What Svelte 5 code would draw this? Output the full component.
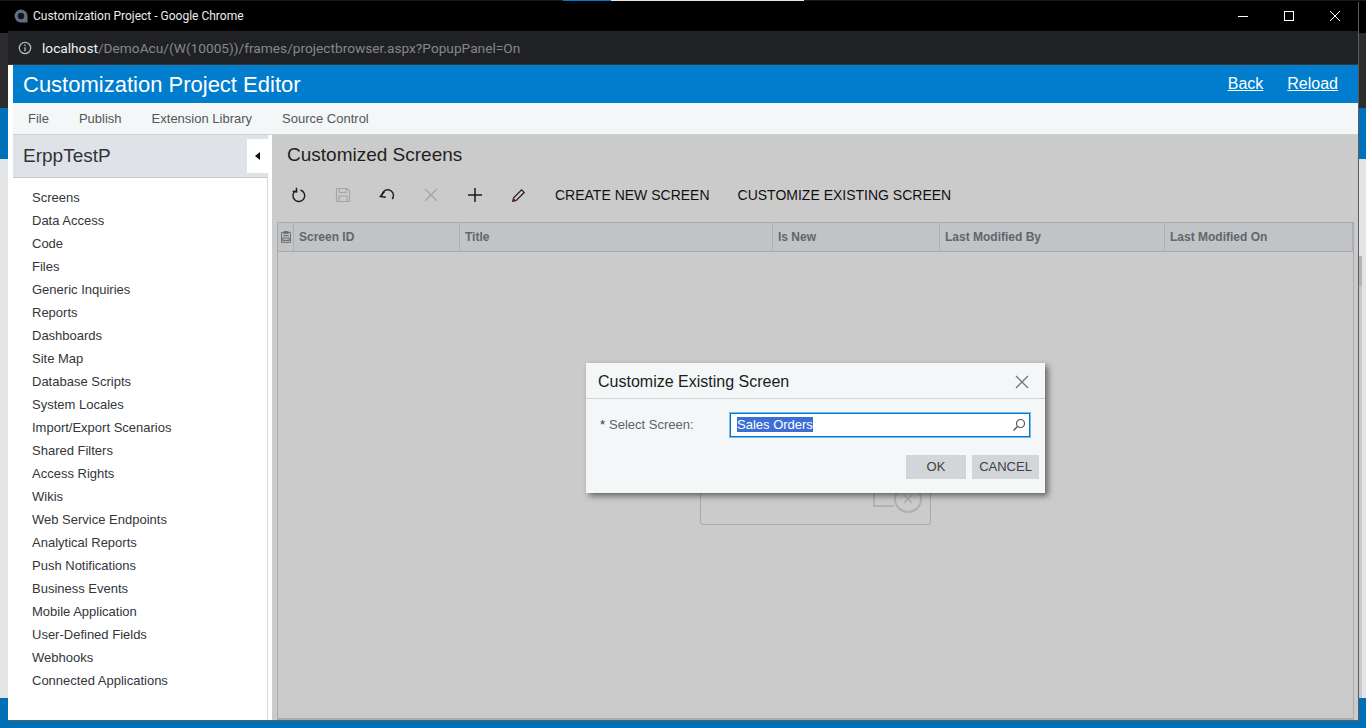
<script>
  const nav = ['Screens','Data Access','Code','Files','Generic Inquiries','Reports','Dashboards','Site Map','Database Scripts','System Locales','Import/Export Scenarios','Shared Filters','Access Rights','Wikis','Web Service Endpoints','Analytical Reports','Push Notifications','Business Events','Mobile Application','User-Defined Fields','Webhooks','Connected Applications'];
  const menu = ['File','Publish','Extension Library','Source Control'];
  const cols = [
    { name: 'Screen ID', w: 166 },
    { name: 'Title', w: 313 },
    { name: 'Is New', w: 167 },
    { name: 'Last Modified By', w: 225 },
    { name: 'Last Modified On', w: 185 }
  ];
</script>

<div class="desktop">
  <div class="strip"><span class="s1"></span><span class="s2"></span></div>
  <div class="d-dark"></div>
  <div class="d-blue"></div>
  <div class="d-gray"></div>
  <div class="d-blue2"></div>
  <div class="edge"><div class="edge-top"></div></div>

  <div class="window">
    <div class="titlebar">
      <svg class="favicon" width="14" height="14" viewBox="0 0 14 14"><path d="M7 .5a6.5 6.5 0 0 1 6.5 6.5v6.5H7A6.5 6.5 0 0 1 7 .5z" fill="#5d6f80"/><circle cx="7" cy="7" r="3.2" fill="#10151a"/></svg>
      <span class="title">Customization Project - Google Chrome</span>
      <div class="winctl">
        <svg width="12" height="12" viewBox="0 0 12 12"><path d="M1 6.5h10" stroke="#fff" fill="none"/></svg>
        <svg width="12" height="12" viewBox="0 0 12 12"><rect x="1.5" y="1.5" width="9" height="9" stroke="#fff" fill="none"/></svg>
        <svg width="12" height="12" viewBox="0 0 12 12"><path d="M1 1l10 10M11 1L1 11" stroke="#fff" fill="none"/></svg>
      </div>
    </div>
    <div class="urlbar">
      <svg width="14" height="14" viewBox="0 0 14 14"><circle cx="7" cy="7" r="5.7" stroke="#b4b6b8" stroke-width="1.3" fill="none"/><path d="M7 6.2v4M7 3.6v1.4" stroke="#b4b6b8" stroke-width="1.4"/></svg>
      <span class="url"><b>localhost</b>/DemoAcu/(W(10005))/frames/projectbrowser.aspx?PopupPanel=On</span>
    </div>

    <div class="page">
      <header class="head">
        <h1>Customization Project Editor</h1>
        <nav><a href="#back">Back</a><a href="#reload">Reload</a></nav>
      </header>
      <div class="menu">
        {#each menu as m}<span>{m}</span>{/each}
      </div>
      <div class="body">
        <aside class="side">
          <div class="side-head">
            <span>ErppTestP</span>
            <button class="collapse" aria-label="Collapse"><i></i></button>
          </div>
          <ul>
            {#each nav as n}<li>{n}</li>{/each}
          </ul>
        </aside>
        <main class="main">
          <h2>Customized Screens</h2>
          <div class="toolbar">
            <svg class="ic" width="16" height="16" viewBox="0 0 16 16"><path d="M4.8 3.6A5.9 5.9 0 1 0 9.5 3" fill="none" stroke="#1c1c1c" stroke-width="1.4"/><path d="M5.4 .8l.3 4.2-4-.8" fill="none" stroke="#1c1c1c" stroke-width="1.4"/></svg>
            <svg class="ic" width="16" height="16" viewBox="0 0 16 16"><path d="M1.5 1.5h10.5l2.5 2.5v10.5h-13z M4.5 1.5v4h6.5v-4 M4 14.5v-5.5h8v5.5" fill="none" stroke="#a4a4a4" stroke-width="1.2"/></svg>
            <svg class="ic" width="16" height="16" viewBox="0 0 16 16"><path d="M3 8.5A5.5 5.5 0 0 1 14.5 8.5c0 1.4-.5 2.5-1.3 3.5" fill="none" stroke="#1c1c1c" stroke-width="1.4"/><path d="M5.5 4.5l-4.2 5 5.5.8" fill="none" stroke="#1c1c1c" stroke-width="1.4"/></svg>
            <svg class="ic" width="16" height="16" viewBox="0 0 16 16"><path d="M2 2l12 12M14 2L2 14" fill="none" stroke="#a4a4a4" stroke-width="1.3"/></svg>
            <svg class="ic" width="16" height="16" viewBox="0 0 16 16"><path d="M8 1v14M1 8h14" fill="none" stroke="#1c1c1c" stroke-width="1.5"/></svg>
            <svg class="ic" width="16" height="16" viewBox="0 0 16 16"><path d="M1.8 14.2l.8-3.4 8-8 2.6 2.6-8 8z" fill="none" stroke="#1c1c1c" stroke-width="1.2"/><path d="M2.2 11.5l2.3 2.3" stroke="#8a1c2a" stroke-width="1.2"/></svg>
            <span class="tbtext">CREATE NEW SCREEN</span>
            <span class="tbtext">CUSTOMIZE EXISTING SCREEN</span>
          </div>
          <div class="grid">
            <div class="ghead">
              <div class="gicon"><svg width="10" height="12" viewBox="0 0 11 13"><path d="M.6 1.6h9.800v10.800H.6zM3 .6h5v2H3z" fill="none" stroke="#6b6f71" stroke-width="1.1"/><path d="M2.5 5h6M2 7.6h7v2.600H2z" fill="none" stroke="#6b6f71" stroke-width="1.2"/></svg></div>
              {#each cols as c, i}<div class="gcol" class:last={i === cols.length - 1} style="width:{c.w}px">{c.name}</div>{/each}
            </div>
            <div class="gbody">
              <div class="empty">
                <svg width="52" height="36" viewBox="0 0 52 36"><path d="M3 10v15h20" fill="none" stroke="#a9a9a9" stroke-width="1.4"/><circle cx="37" cy="18" r="13" fill="none" stroke="#b0b0b0" stroke-width="2"/><path d="M33 14l8 8M41 14l-8 8" stroke="#b0b0b0" stroke-width="1.6"/></svg>
              </div>
            </div>
          </div>
        </main>
      </div>
    </div>
  </div>

  <div class="dialog" role="dialog">
    <div class="dlg-head">
      <span>Customize Existing Screen</span>
      <svg width="14" height="14" viewBox="0 0 14 14"><path d="M1 1l12 12M13 1L1 13" stroke="#70777c" stroke-width="1.3" fill="none"/></svg>
    </div>
    <div class="dlg-row">
      <label for="scr"><em>*</em>Select Screen:</label>
      <div class="input" id="scr">
        <span class="sel">Sales Orders</span>
        <svg width="14" height="14" viewBox="0 0 14 14"><circle cx="8.5" cy="5.5" r="4" fill="none" stroke="#555" stroke-width="1.2"/><path d="M5.5 8.5l-4 4" stroke="#555" stroke-width="1.4"/></svg>
      </div>
    </div>
    <div class="dlg-btns">
      <button class="ok">OK</button>
      <button class="cancel">CANCEL</button>
    </div>
  </div>
</div>

<style>
  :global(body) { margin: 0; background: #000; overflow: hidden; }
  .desktop { position: relative; width: 1366px; height: 728px; overflow: hidden; display: flex; flex-direction: column; font-family: "Liberation Sans", Arial, sans-serif; background: #d9dcdd; }
  .strip { height: 1px; flex: none; background: #191919; display: flex; padding-left: 563px; }
  .s1 { width: 48px; background: #0078d4; }
  .s2 { width: 193px; background: #e6e6e6; }
  .d-dark { height: 107px; flex: none; background: #2c2c2c; border-top: 32px solid #000; box-sizing: border-box; }
  .d-blue { height: 51px; flex: none; background: #0072bc; }
  .d-gray { flex: 1; background: #e2e4e5; }
  .d-blue2 { height: 30px; flex: none; background: #006fb6; }
  .edge { position: absolute; left: 1359px; top: 256px; width: 3px; height: 442px; background: #c6cacd; }
  .edge-top { height: 30px; background: #b2b6b9; }

  .window { position: absolute; left: 8px; top: 1px; width: 1350px; height: 719px; display: flex; flex-direction: column; box-shadow: 1px 1px 0 #5c5c5c; background: #fff; }
  .titlebar { height: 30px; background: #000; flex: none; display: flex; align-items: center; padding-left: 6px; color: #fff; }
  .favicon { margin-right: 5px; }
  .title { color: #ececec; font-family: "Roboto", sans-serif; font-size: 12px; }
  .winctl { margin-left: auto; display: flex; gap: 34px; padding-right: 17px; margin-top: -1px; }
  .urlbar { height: 34px; background: #202124; flex: none; display: flex; align-items: center; padding-left: 10px; box-sizing: border-box; border-bottom: 1px solid #3a3532; }
  .url { margin-left: 10px; color: #85878a; font: 13.7px "Roboto", sans-serif; white-space: nowrap; }
  .url b { color: #f1f1f1; font-weight: 400; }

  .page { flex: 1; min-height: 0; display: flex; flex-direction: column; border-left: 5px solid #fff; background: #fff; }
  .head { height: 38px; flex: none; background: #007dcc; display: flex; align-items: center; justify-content: space-between; color: #fff; padding-left: 10px; padding-right: 20px; }
  h1 { margin: 0; font-size: 22px; font-weight: 400; padding-top: 2px; }
  .head nav { display: flex; gap: 24px; }
  .head a { color: #fff; font-size: 16px; text-decoration: underline; }
  .menu { height: 31px; flex: none; background: #f3f7f8; display: flex; align-items: center; padding-left: 15px; gap: 30px; font-size: 13px; color: #53565a; box-sizing: border-box; }
  .body { flex: 1; min-height: 0; display: flex; background: #fff; border-top: 1px solid #cfd2d3; }
  .side { width: 255px; flex: none; background: #fff; border-right: 1px solid #d8d8d8; box-sizing: border-box; }
  .side-head { height: 43px; background: #dfe3e7; border-bottom: 1px solid #c8cbce; box-sizing: border-box; display: flex; align-items: center; justify-content: space-between; padding-left: 10px; font-size: 19px; color: #303338; }
  .collapse { width: 21px; height: 34px; border: 0; padding: 0; background: #fff; display: flex; align-items: center; justify-content: center; margin: -1px -1px 0 0; }
  .collapse i { display: block; width: 0; height: 0; border: 4px solid transparent; border-right: 5px solid #111; border-left: 0; }
  ul { list-style: none; margin: 0; padding: 8px 0 0 19px; }
  li { height: 23px; line-height: 23px; font-size: 13px; color: #33363b; }
  .main { flex: 1; min-width: 0; margin-left: 4px; display: flex; flex-direction: column; background: #cbcbcb; }
  h2 { margin: 0; font-size: 19px; font-weight: 400; color: #1f1f1f; height: 40px; line-height: 40px; padding-left: 15px; }
  .toolbar { height: 40px; flex: none; display: flex; align-items: center; padding-left: 19px; }
  .ic { margin-right: 28px; flex: none; }
  .tbtext { font-size: 14px; color: #111; margin-right: 28px; }
  .grid { flex: 1; min-height: 0; margin: 7px 4px 0 5px; border: 1px solid #ababab; border-bottom: 2px solid #ababab; display: flex; flex-direction: column; }
  .ghead { height: 29px; flex: none; background: #c0c4c6; border-bottom: 1px solid #ababab; display: flex; box-sizing: border-box; }
  .gicon { width: 16px; flex: none; display: flex; align-items: center; justify-content: center; border-right: 1px solid #adb0b2; box-sizing: border-box; }
  .gcol { flex: none; box-sizing: border-box; border-right: 1px solid #adb0b2; padding-left: 5px; line-height: 28px; font-size: 12px; font-weight: 700; color: #62666a; }
  .gcol.last { flex: 1; }
  .gbody { flex: 1; position: relative; }
  .empty { position: absolute; left: 422px; top: 142px; width: 231px; height: 131px; border: 1px solid #a9a9a9; border-radius: 3px; box-sizing: border-box; }
  .empty svg { position: absolute; right: 7px; bottom: 7px; }

  .dialog { position: absolute; left: 586px; top: 363px; width: 459px; height: 130px; background: #f3f7f8; box-shadow: 3px 3px 6px rgba(0,0,0,.5); display: flex; flex-direction: column; }
  .dlg-head { height: 36px; flex: none; box-sizing: border-box; border-bottom: 1px solid #cfd3d5; display: flex; align-items: center; justify-content: space-between; padding: 3px 16px 0 12px; font-size: 16px; color: #1c1c1c; }
  .dlg-row { display: flex; align-items: center; margin-top: 14px; padding-left: 14px; }
  label { width: 130px; font-size: 13px; color: #5f6367; display: block; padding-bottom: 2px; }
  em { font-style: normal; margin-right: 4px; color: #333; }
  .input { width: 300px; height: 24px; box-sizing: border-box; border: 1px solid #0078c8; outline: 1px solid #7cbcec; background: #fff; display: flex; align-items: center; justify-content: space-between; padding: 0 3px 0 6px; font-size: 13px; }
  .sel { background: #3b6fd6; color: #fff; line-height: 15px; margin-bottom: 2px; }
  .dlg-btns { display: flex; justify-content: flex-end; gap: 6px; padding-right: 6px; margin-top: 18px; }
  .dlg-btns button { height: 24px; border: 0; background: #d2d6d9; font: 13px "Liberation Sans", Arial, sans-serif; color: #3e4144; padding: 0 0 2px; }
  .ok { width: 60px; }
  .cancel { width: 67px; }
</style>
